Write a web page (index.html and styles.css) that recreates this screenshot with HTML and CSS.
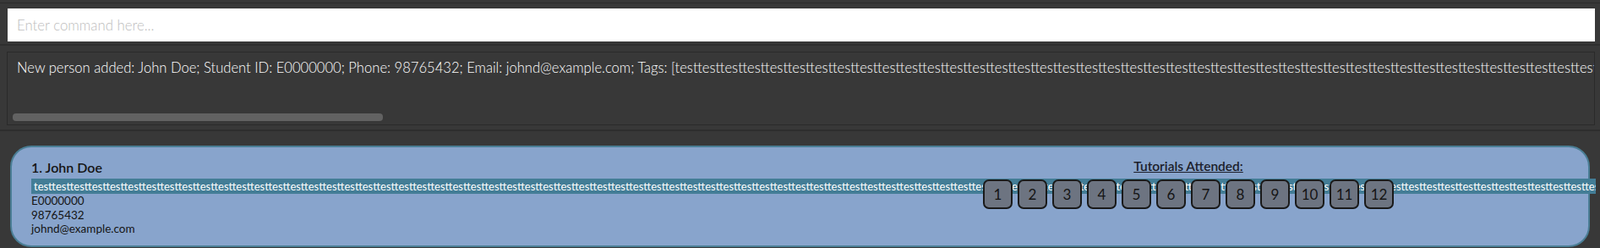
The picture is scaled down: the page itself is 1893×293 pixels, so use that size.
FILE: index.html
```html
<!DOCTYPE html>
<html>
<head>
  <meta charset="utf-8">
  <link rel="stylesheet" href="styles.css">
</head>
<body>
  <div class="menu-strip"></div>

  <div class="command-pane">
    <input class="command-input" type="text" placeholder="Enter command here...">
  </div>

  <div class="result-pane">
    <div class="result-box">
      <div class="result-text">New person added: John Doe; Student ID: E0000000; Phone: 98765432; Email: johnd@example.com; Tags: [testtesttesttesttesttesttesttesttesttesttesttesttesttesttesttesttesttesttesttesttesttesttesttesttesttesttesttesttesttesttesttesttesttesttesttesttesttesttesttesttesttesttesttesttesttesttesttesttesttesttesttesttesttesttesttesttesttesttesttesttesttesttesttesttesttesttesttesttesttesttesttesttesttesttesttesttesttesttesttesttesttesttest]</div>
      <div class="scroll-thumb"></div>
    </div>
  </div>

  <div class="list-pane">
    <div class="person-card">
      <div class="person-info">
        <div class="person-name">1. John Doe</div>
        <div class="tag">testtesttesttesttesttesttesttesttesttesttesttesttesttesttesttesttesttesttesttesttesttesttesttesttesttesttesttesttesttesttesttesttesttesttesttesttesttesttesttesttesttesttesttesttesttesttesttesttesttesttesttesttesttesttesttesttesttesttesttesttesttesttesttesttesttesttesttesttesttesttesttesttesttesttesttesttesttesttesttesttesttesttesttesttesttesttesttesttesttesttesttesttesttesttesttesttesttesttesttest</div>
        <div class="person-detail">E0000000</div>
        <div class="person-detail">98765432</div>
        <div class="person-detail">johnd@example.com</div>
      </div>
      <div class="tutorials">
        <div class="tutorials-title">Tutorials Attended:</div>
        <div class="tutorial-list">
          <div class="tutorial-box">1</div>
          <div class="tutorial-box">2</div>
          <div class="tutorial-box">3</div>
          <div class="tutorial-box">4</div>
          <div class="tutorial-box">5</div>
          <div class="tutorial-box">6</div>
          <div class="tutorial-box">7</div>
          <div class="tutorial-box">8</div>
          <div class="tutorial-box">9</div>
          <div class="tutorial-box">10</div>
          <div class="tutorial-box">11</div>
          <div class="tutorial-box">12</div>
        </div>
      </div>
    </div>
  </div>
</body>
</html>
```

FILE: styles.css
```css
body {
  margin: 0;
  height: 293px;
  overflow: hidden;
  background: #383838;
  font-family: 'Lato', 'Open Sans', sans-serif;
}

.menu-strip {
  height: 3px;
  border-bottom: 1px solid #2c2c2c;
}

.command-pane {
  padding: 6px 6px 3px 9px;
  border-bottom: 2px solid #2e2e2e;
}

.command-input {
  display: block;
  box-sizing: border-box;
  width: 100%;
  height: 39px;
  margin: 0;
  padding: 0 11px;
  border: none;
  outline: none;
  background: white;
  font-family: 'Lato', sans-serif;
  font-weight: 300;
  font-size: 16.8px;
  color: #222;
}

.command-input::placeholder {
  color: #bdbdbd;
}

.result-pane {
  padding: 7px 6px 5px 8px;
  border-bottom: 2px solid #2e2e2e;
}

.result-box {
  box-sizing: border-box;
  height: 87px;
  border: 1px solid #2a2a2a;
  padding: 8px 0 4px 0;
  overflow: hidden;
  display: flex;
  flex-direction: column;
  justify-content: space-between;
}

.result-text {
  padding-left: 11px;
  white-space: nowrap;
  font-weight: 300;
  font-size: 16.6px;
  line-height: 20px;
  color: #ffffff;
}

.scroll-thumb {
  width: 438px;
  height: 9px;
  margin-left: 6px;
  border-radius: 4px;
  background: #626262;
}

.list-pane {
  padding: 17px 0 0 12px;
}

.person-card {
  box-sizing: border-box;
  width: 1869px;
  height: 120px;
  border: 2px solid #4a7e95;
  border-radius: 25px;
  background: #88a4cc;
  display: flex;
  align-items: flex-start;
}

.person-info {
  flex: 0 0 auto;
  width: 1126px;
  padding: 15px 0 0 23px;
  color: #151515;
}

.person-name {
  font-weight: 600;
  font-size: 16px;
  line-height: 18px;
  margin-bottom: 4px;
}

.tag {
  width: 1851px;
  height: 18px;
  padding-left: 3px;
  box-sizing: border-box;
  overflow: hidden;
  white-space: nowrap;
  background: #437d96;
  color: white;
  font-size: 13px;
  line-height: 18px;
}

.person-detail {
  font-size: 13.5px;
  line-height: 16.5px;
}

.tutorials {
  flex: 0 0 auto;
  width: 486px;
  padding-top: 12px;
  text-align: center;
}

.tutorials-title {
  display: inline-block;
  font-weight: 600;
  font-size: 15.5px;
  line-height: 18px;
  color: #1c1e2a;
  text-decoration: underline;
  margin-bottom: 7px;
}

.tutorial-list {
  display: flex;
  justify-content: center;
  gap: 6px;
}

.tutorial-box {
  box-sizing: border-box;
  width: 35px;
  height: 35px;
  border: 2.5px solid #1a1a1a;
  border-radius: 7px;
  background: #6d7481;
  display: flex;
  align-items: center;
  justify-content: center;
  font-size: 17px;
  color: #151515;
}
```
